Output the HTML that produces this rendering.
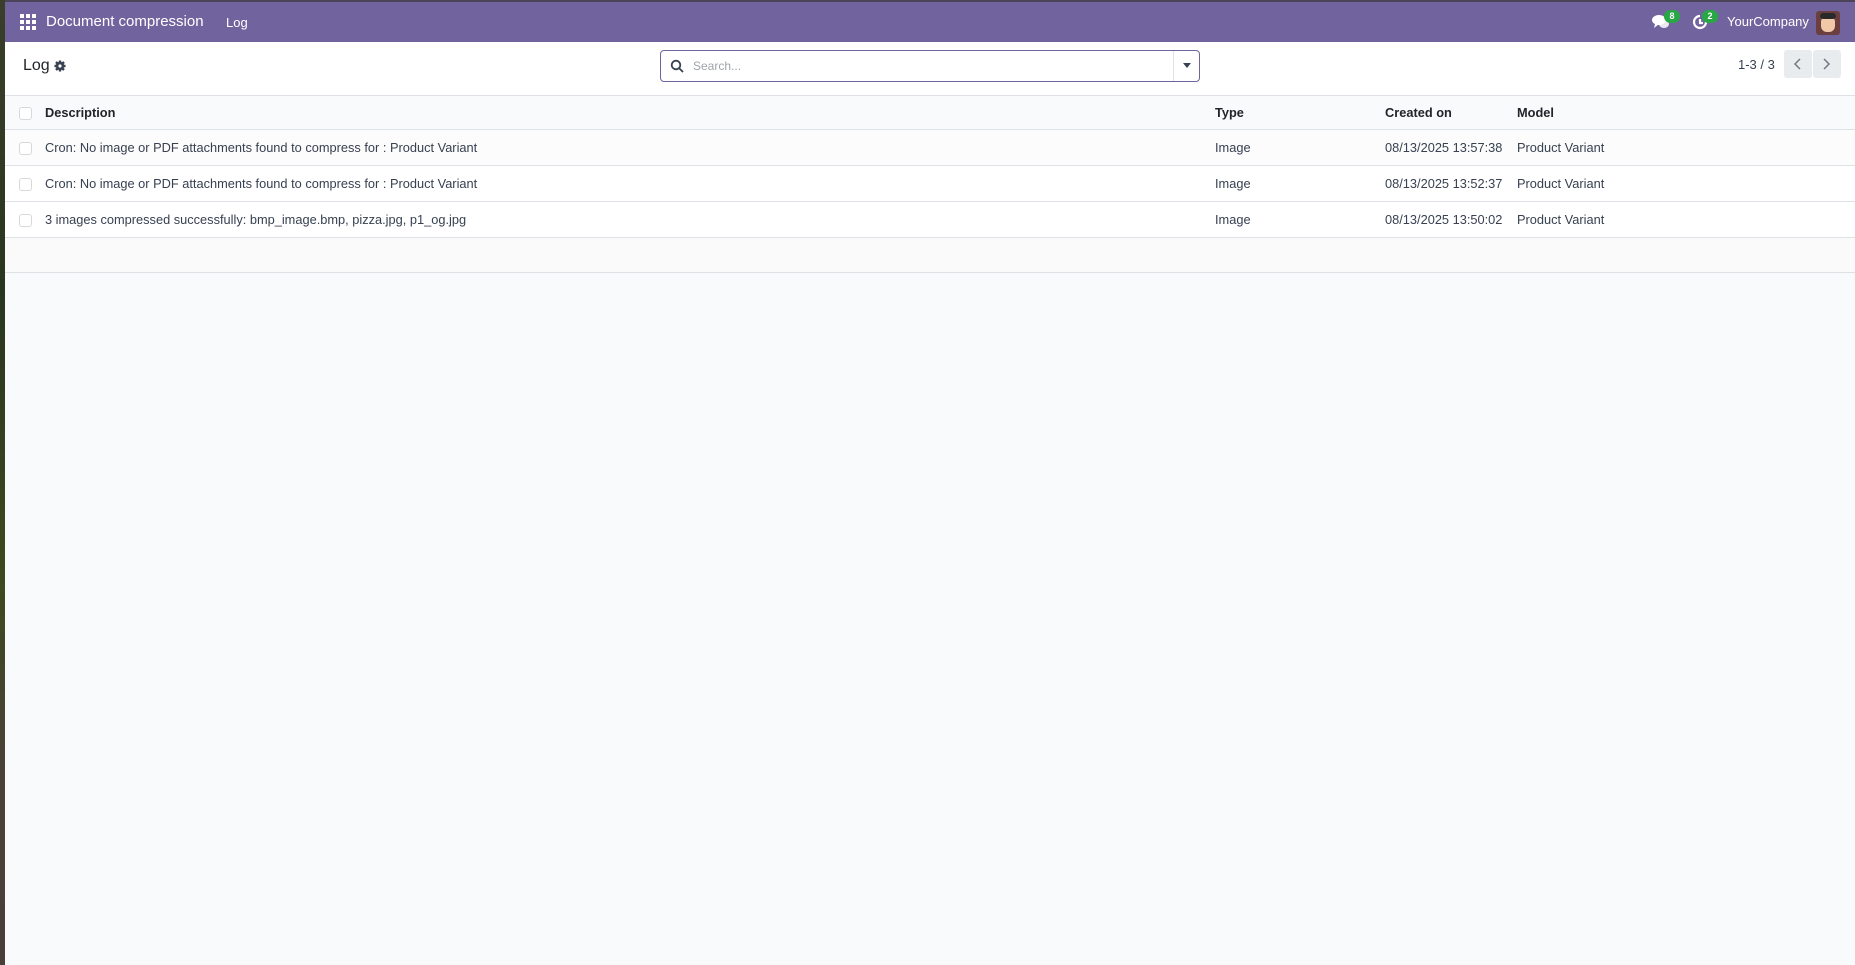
<!DOCTYPE html>
<html><head><meta charset="utf-8"><style>
*{box-sizing:border-box;margin:0;padding:0}
body{width:1855px;height:965px;overflow:hidden;background:#3a3a2a;font-family:"Liberation Sans",sans-serif;color:#374151;position:relative}
.strip{position:absolute;left:0;top:0;width:5px;height:965px;background:linear-gradient(#3a3e2a,#2a3520 30%,#3d4a1e 60%,#4a4038 80%,#4a3f38)}
.app{position:absolute;left:5px;top:0;right:0;bottom:0;background:#f9fafb}
.nav{height:42px;background:#71639e;border-top:2px solid #4a4458;position:relative;color:#fff}
.nav .t{position:absolute;left:41px;top:11px;font-size:15px;color:#fff}
.nav .l{position:absolute;left:221px;top:13px;font-size:13px}
.cp{height:54px;background:#fff;border-bottom:1px solid #dee2e6;position:relative}
.cp .ttl{position:absolute;left:18px;top:15px;font-size:16px;color:#212529}
.search{position:absolute;left:655px;top:8px;width:540px;height:32px;border:1px solid #71639e;border-radius:4px;background:#fff}
.search .ph{position:absolute;left:32px;top:8px;font-size:12px;color:#a0a4aa}
.search .dd{position:absolute;right:0;top:0;width:26px;height:30px;border-left:1px solid #dee2e6}
.pager{position:absolute;left:1733px;top:15px;font-size:13px;color:#374151}
.pb{position:absolute;top:8px;width:28px;height:28px;background:#e9ecef;border-radius:3px}
table{border-collapse:collapse;width:100%;font-size:12.8px}
td,th{height:36px;border-bottom:1px solid #dee2e6;text-align:left;white-space:nowrap;vertical-align:middle}
th{height:33px;background:#f9fafb;font-weight:bold;color:#212529}
tr.r td{background:#fff}
tr.r:nth-child(2) td{background:#fcfcfc}
.cb{width:13px;height:13px;border:1px solid #d6d9dc;border-radius:3px;background:#fff;display:inline-block;margin-left:14px;vertical-align:middle}
</style></head><body>
<div class="strip"></div>
<div class="app">
 <div class="nav">
  <svg style="position:absolute;left:15px;top:12px" width="16" height="16" viewBox="0 0 16 16" fill="#fff"><rect x="0" y="0" width="4" height="4"/><rect x="6" y="0" width="4" height="4"/><rect x="12" y="0" width="4" height="4"/><rect x="0" y="6" width="4" height="4"/><rect x="6" y="6" width="4" height="4"/><rect x="12" y="6" width="4" height="4"/><rect x="0" y="12" width="4" height="4"/><rect x="6" y="12" width="4" height="4"/><rect x="12" y="12" width="4" height="4"/></svg>
  <div class="t">Document compression</div>
  <div class="l">Log</div>
  <svg style="position:absolute;left:1647px;top:13px" width="18" height="14" viewBox="0 0 18 14" fill="#fff"><ellipse cx="7" cy="5" rx="7" ry="5"/><path d="M3 9 L2 13 L7 9z"/><ellipse cx="12" cy="9" rx="5" ry="4" opacity=".85"/></svg>
  <div style="position:absolute;left:1659px;top:8px;width:16px;height:13px;border-radius:7px;background:#28a745;font-size:9px;font-weight:bold;text-align:center;line-height:13px">8</div>
  <svg style="position:absolute;left:1687px;top:12px" width="16" height="16" viewBox="0 0 16 16" fill="none" stroke="#fff" stroke-width="2.2"><path d="M8 2 A6 6 0 1 0 14 8"/><path d="M8 5 V9 H11"/></svg>
  <div style="position:absolute;left:1697px;top:8px;width:16px;height:13px;border-radius:7px;background:#28a745;font-size:9px;font-weight:bold;text-align:center;line-height:13px">2</div>
  <div style="position:absolute;left:1722px;top:12px;font-size:13px">YourCompany</div>
  <div style="position:absolute;left:1811px;top:9px;width:24px;height:24px;border-radius:3px;background:#6b3f3f;overflow:hidden"><div style="position:absolute;left:5px;top:5px;width:14px;height:16px;border-radius:6px;background:#f1c8a8"></div><div style="position:absolute;left:4px;top:2px;width:16px;height:6px;background:#2a2a2a;border-radius:3px"></div></div>
 </div>
 <div class="cp">
  <div class="ttl">Log</div>
  <svg style="position:absolute;left:49px;top:18px" width="12" height="12" viewBox="0 0 12 12"><circle cx="6" cy="6" r="4.2" fill="#374151"/><g stroke="#374151" stroke-width="2.4"><path d="M6 0.5V11.5M0.5 6H11.5M2 2L10 10M10 2L2 10"/></g><circle cx="6" cy="6" r="1.6" fill="#fff"/></svg>
  <div class="search">
   <svg style="position:absolute;left:9px;top:8px" width="14" height="14" viewBox="0 0 14 14" fill="none" stroke="#374151" stroke-width="1.8"><circle cx="6" cy="6" r="4.3"/><path d="M9.2 9.2L13 13"/></svg>
   <div class="ph">Search...</div>
   <div class="dd"><svg style="position:absolute;left:9px;top:12px" width="8" height="5"><path d="M0 0H8L4 5z" fill="#374151"/></svg></div>
  </div>
  <div class="pager">1-3 / 3</div>
  <div class="pb" style="left:1779px"><svg style="position:absolute;left:9px;top:8px" width="8" height="12" fill="none" stroke="#6b7280" stroke-width="1.4"><path d="M7 1L2 6L7 11"/></svg></div>
  <div class="pb" style="left:1808px"><svg style="position:absolute;left:10px;top:8px" width="8" height="12" fill="none" stroke="#6b7280" stroke-width="1.4"><path d="M1 1L6 6L1 11"/></svg></div>
 </div>
 <table>
  <tr><th style="width:40px"><span class="cb"></span></th><th style="width:1170px">Description</th><th style="width:170px">Type</th><th style="width:132px">Created on</th><th>Model</th></tr>
  <tr class="r"><td><span class="cb"></span></td><td>Cron: No image or PDF attachments found to compress for : Product Variant</td><td>Image</td><td>08/13/2025 13:57:38</td><td>Product Variant</td></tr>
  <tr class="r"><td><span class="cb"></span></td><td>Cron: No image or PDF attachments found to compress for : Product Variant</td><td>Image</td><td>08/13/2025 13:52:37</td><td>Product Variant</td></tr>
  <tr class="r"><td><span class="cb"></span></td><td>3 images compressed successfully: bmp_image.bmp, pizza.jpg, p1_og.jpg</td><td>Image</td><td>08/13/2025 13:50:02</td><td>Product Variant</td></tr>
  <tr><td style="height:35px;background:#fafafb" colspan="5"></td></tr>
 </table>
</div>
</body></html>
